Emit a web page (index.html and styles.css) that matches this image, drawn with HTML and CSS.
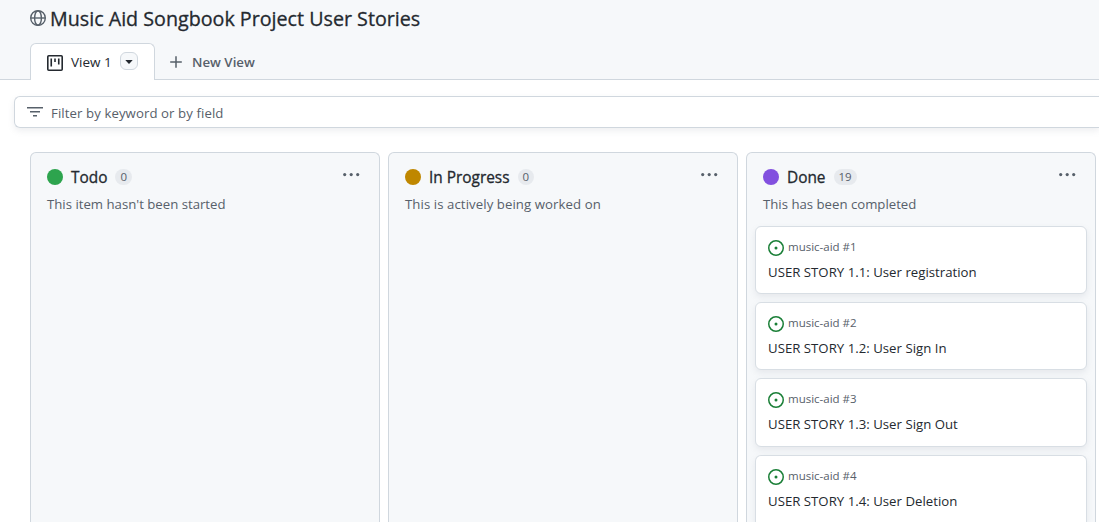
FILE: index.html
```html
<!DOCTYPE html>
<html lang="en">
<head>
<meta charset="utf-8">
<title>Music Aid Songbook Project User Stories</title>
<link rel="stylesheet" href="styles.css">
</head>
<body>
<svg class="sprite" aria-hidden="true">
  <symbol id="dots" viewBox="0 0 18 4"><circle cx="1.7" cy="1.6" r="1.6"/><circle cx="8.2" cy="1.6" r="1.6"/><circle cx="14.7" cy="1.6" r="1.6"/></symbol>
  <symbol id="issue" viewBox="0 0 16 16"><path d="M8 9.5a1.5 1.5 0 1 0 0-3 1.5 1.5 0 0 0 0 3Z"/><path d="M8 0a8 8 0 1 1 0 16A8 8 0 0 1 8 0ZM1.5 8a6.5 6.5 0 1 0 13 0 6.5 6.5 0 0 0-13 0Z"/></symbol>
</svg>
<header class="header">
  <div class="title-row">
    <svg class="globe" width="16" height="16" viewBox="0 0 16 16" fill="none" stroke="currentColor" stroke-width="1.4"><circle cx="8" cy="8" r="7.3"/><ellipse cx="8" cy="8" rx="3.4" ry="7.3"/><path d="M.8 8h14.4"/></svg>
    <h1 class="title">Music Aid Songbook Project User Stories</h1>
  </div>
  <nav class="tabs">
    <div class="tab tab-active">
      <svg class="board-icon" width="16" height="16" viewBox="0 0 16 16" fill="none" stroke="currentColor" stroke-width="1.6"><rect x=".8" y=".8" width="14.4" height="14.4" rx="1"/><path d="M4.25 3.5v8M8 3.5v3.5M11.75 3.5v6"/></svg>
      <span class="tab-label">View 1</span>
      <button class="tab-menu" aria-label="View options"><svg width="8" height="4" viewBox="0 0 8 4" fill="currentColor"><path d="M.3 0h7.4L4.3 3.7q-.3.3-.6 0Z"/></svg></button>
    </div>
    <div class="tab tab-new">
      <svg width="12" height="12" viewBox="0 0 12 12" stroke="currentColor" stroke-width="1.5"><path d="M6 .2v11.6M.2 6h11.6"/></svg>
      <span class="new-label">New View</span>
    </div>
  </nav>
</header>
<main>
  <div class="filter">
    <svg width="16" height="10" viewBox="0 0 16 10" stroke="currentColor" stroke-width="1.5"><path d="M0 .75h16M3 4.75h10M6 8.75h4"/></svg>
    <span class="filter-text">Filter by keyword or by field</span>
  </div>
  <div class="board">
    <section class="column">
      <div class="column-head"><span class="dot green"></span><h2 class="name">Todo</h2><span class="count">0</span><svg class="more" width="18" height="4"><use href="#dots"/></svg></div>
      <p class="desc">This item hasn't been started</p>
    </section>
    <section class="column">
      <div class="column-head"><span class="dot amber"></span><h2 class="name">In Progress</h2><span class="count">0</span><svg class="more" width="18" height="4"><use href="#dots"/></svg></div>
      <p class="desc desc-wide">This is actively being worked on</p>
    </section>
    <section class="column">
      <div class="column-head"><span class="dot purple"></span><h2 class="name">Done</h2><span class="count">19</span><svg class="more" width="18" height="4"><use href="#dots"/></svg></div>
      <p class="desc">This has been completed</p>
      <div class="cards">
        <article class="card"><div class="ref"><svg width="16" height="16"><use href="#issue"/></svg><span class="repo">music-aid #1</span></div><div class="story">USER STORY 1.1: User registration</div></article>
        <article class="card"><div class="ref"><svg width="16" height="16"><use href="#issue"/></svg><span class="repo">music-aid #2</span></div><div class="story">USER STORY 1.2: User Sign In</div></article>
        <article class="card"><div class="ref"><svg width="16" height="16"><use href="#issue"/></svg><span class="repo">music-aid #3</span></div><div class="story">USER STORY 1.3: User Sign Out</div></article>
        <article class="card"><div class="ref"><svg width="16" height="16"><use href="#issue"/></svg><span class="repo">music-aid #4</span></div><div class="story">USER STORY 1.4: User Deletion</div></article>
      </div>
    </section>
  </div>
</main>
</body>
</html>
```
FILE: styles.css
```css
* { box-sizing: border-box; }
body {
  margin: 0;
  height: 522px;
  overflow: hidden;
  background: #fff;
  color: #24292f;
  font: 14px/20px "Segoe UI", "Open Sans", "Noto Sans", sans-serif;
}
h1, h2, p { margin: 0; }
svg { display: block; flex: none; }
span, h1, h2 { white-space: nowrap; }
.sprite { display: none; }

.header {
  display: flex;
  flex-direction: column;
  justify-content: space-between;
  height: 80px;
  background: #f6f8fa;
  box-shadow: inset 0 -1px #d0d7de;
}
.title-row { display: flex; align-items: center; gap: 4px; height: 37px; padding-left: 30px; }
.globe { margin-top: -1px; color: #57606a; }
.title { font-size: 19.7px; font-weight: 500; line-height: 28px; -webkit-text-stroke: .3px currentColor; }
.tabs { display: flex; padding-left: 30px; }
.tab { display: flex; align-items: center; height: 37px; }
.tab-active {
  width: 125px;
  padding-left: 16px;
  border: 1px solid #d0d7de;
  border-bottom: 0;
  border-radius: 6px 6px 0 0;
  background: #fff;
}
.board-icon { margin-top: 1px; }
.tab-label { width: 41px; margin: 0 8px; font-size: 13.5px; }
.tab-menu {
  display: flex;
  align-items: center;
  justify-content: center;
  width: 18px;
  height: 18px;
  margin-top: -2px;
  padding: 0;
  border: 1px solid #d0d7de;
  border-radius: 6px;
  background: #f6f8fa;
  color: #24292f;
}
.tab-menu svg { margin-top: 1px; }
.tab-new { gap: 10px; padding-left: 15px; color: #57606a; }
.new-label { font-size: 13.3px; font-weight: 600; }

.filter {
  display: flex;
  align-items: center;
  gap: 8px;
  height: 32px;
  margin: 16px 0 0 14px;
  padding: 1px 12px 0;
  border: 1px solid #d0d7de;
  border-right: 0;
  border-radius: 6px 0 0 6px;
  box-shadow: 0 3px 6px rgba(140, 149, 159, .15);
  color: #57606a;
}
.filter svg { margin-top: -1px; }
.filter-text { font-size: 13.2px; letter-spacing: .09px; }

.board { display: flex; gap: 8px; margin-top: 24px; padding-left: 30px; }
.column {
  flex: 0 0 350px;
  height: 370px;
  padding: 13px 8px 0;
  border: 1px solid #d0d7de;
  border-bottom: 0;
  border-radius: 6px 6px 0 0;
  background: #f6f8fa;
}
.column-head { display: flex; align-items: center; height: 22px; padding: 0 10px 0 8px; }
.dot { width: 16px; height: 16px; margin-right: 8px; border-radius: 50%; }
.green { background: #2da44e; }
.amber { background: #bf8700; }
.purple { background: #8250df; }
.name { padding-top: 2px; font-size: 15.4px; font-weight: 500; line-height: 22px; -webkit-text-stroke: .3px currentColor; }
.count {
  min-width: 16px;
  height: 16px;
  margin-left: 8px;
  padding: 0 5px;
  border-radius: 8px;
  background: #e7eaee;
  color: #57606a;
  font-size: 11.5px;
  line-height: 16px;
  text-align: center;
}
.more { margin: -5px 0 0 auto; fill: #57606a; }
.desc { margin: 6px 0 0 8px; color: #57606a; font-size: 13.2px; white-space: nowrap; }
.desc-wide { letter-spacing: .08px; }
.cards { display: grid; gap: 8px; margin-top: 12px; }
.card {
  height: 68.2px;
  padding: 11px 12px;
  border: 1px solid #d8dee4;
  border-radius: 6px;
  background: #fff;
  box-shadow: 0 3px 6px rgba(140, 149, 159, .15);
}
.card:last-child { height: 67.4px; border-bottom: 0; border-radius: 6px 6px 0 0; }
.ref { display: flex; gap: 4px; height: 18px; color: #57606a; font-size: 11.5px; line-height: 17px; }
.ref svg { margin-top: 2px; fill: #1a7f37; }
.story { margin-top: 6px; font-size: 13.2px; letter-spacing: .02px; }
```
